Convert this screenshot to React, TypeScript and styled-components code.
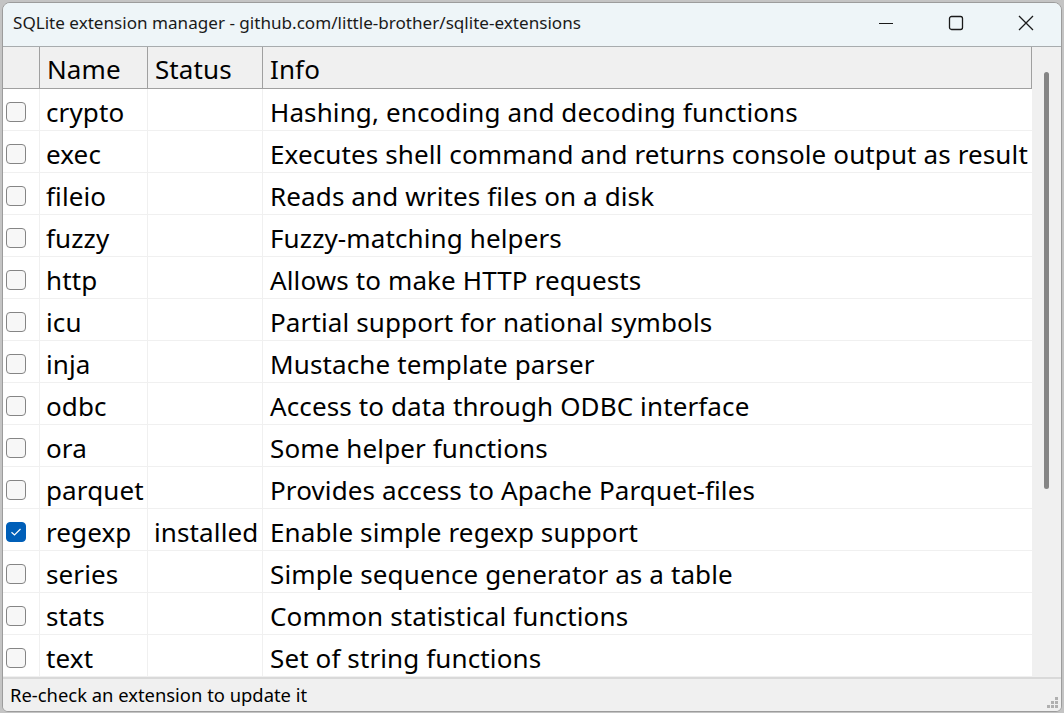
import React from "react";
import styled, { createGlobalStyle } from "styled-components";

const Global = createGlobalStyle`
  html, body { margin: 0; padding: 0; background: #c4c4c4; }
  body { font-family: "Noto Sans", "Open Sans", sans-serif; color: #000; }
  * { box-sizing: border-box; }
`;

const Window = styled.div`
  margin: 2px 2px 0 2px;
  width: 1060px;
  height: 710px;
  border: 1px solid #9c9c9c;
  border-radius: 8px 8px 6px 6px;
  background: #f0f0f0;
  overflow: hidden;
  display: flex;
  flex-direction: column;
`;

const TitleBar = styled.div`
  height: 44px;
  flex: none;
  background: #eef5f8;
  border-bottom: 1px solid #a8acae;
  display: flex;
  align-items: center;
  padding-left: 10px;
`;

const Title = styled.div`
  flex: 1;
  font-size: 17.1px;
  color: #1a1a1a;
  padding-bottom: 4px;
  white-space: nowrap;
`;

const CaptionButton = styled.div`
  width: 70px;
  height: 42px;
  display: flex;
  align-items: center;
  justify-content: center;
  padding-bottom: 4px;
`;

const Body = styled.div`
  flex: 1;
  display: flex;
  min-height: 0;
  background: #fff;
`;

const TableArea = styled.div`
  width: 1030px;
  display: flex;
  flex-direction: column;
  border-right: 1px solid #f0f0f0;
  overflow: hidden;
`;

const cols = "37px 108px 115px 769px";

const HeaderRow = styled.div`
  display: grid;
  flex: none;
  grid-template-columns: ${cols};
  height: 42px;
  background: #f0f0f0;
  border-bottom: 1px solid #a0a0a0;
  width: 1029px;
`;

const HeaderCell = styled.div`
  border-right: 1px solid #a0a0a0;
  font-size: 26px;
  padding-left: 7px;
  padding-top: 2px;
  display: flex;
  align-items: center;
  letter-spacing: 0.1px;
  white-space: nowrap;
  overflow: hidden;
`;

const Row = styled.div`
  display: grid;
  flex: none;
  grid-template-columns: ${cols};
  height: 42px;
  border-bottom: 1px solid #f0f0f0;
`;

const Cell = styled.div`
  border-right: 1px solid #f0f0f0;
  font-size: 26px;
  padding-left: 6px;
  display: flex;
  align-items: center;
  white-space: nowrap;
  overflow: hidden;
  letter-spacing: 0.12px;
  padding-top: 5px;
`;

const InfoCell = styled(Cell)`
  border-right: none;
  padding-left: 7px;
`;

const BoxCell = styled.div`
  border-right: 1px solid #f0f0f0;
  display: flex;
  align-items: center;
  padding-left: 3px;
  padding-top: 4px;
`;

const Check = styled.div<{ $on?: boolean }>`
  width: 20px;
  height: 20px;
  border-radius: 4px;
  border: 1px solid ${(p) => (p.$on ? "#005fb8" : "#858585")};
  background: ${(p) => (p.$on ? "#005fb8" : "#f7f7f7")};
  display: flex;
  align-items: center;
  justify-content: center;
`;

const ScrollTrack = styled.div`
  flex: 1;
  background: #f0f0f0;
  position: relative;
`;

const Thumb = styled.div`
  position: absolute;
  left: 11px;
  top: 25px;
  width: 5px;
  height: 417px;
  border-radius: 3px;
  background: #858585;
`;

const StatusBar = styled.div`
  height: 34px;
  flex: none;
  border-top: 2px solid #d9d9d9;
  background: #f0f0f0;
  display: flex;
  align-items: center;
  padding-left: 7px;
  font-size: 18.4px;
  position: relative;
  padding-bottom: 2px;
  white-space: nowrap;
`;

const Grip = styled.svg`
  position: absolute;
  right: 2px;
  bottom: 2px;
`;

const data: [string, string, string][] = [
  ["crypto", "", "Hashing, encoding and decoding functions"],
  ["exec", "", "Executes shell command and returns console output as result"],
  ["fileio", "", "Reads and writes files on a disk"],
  ["fuzzy", "", "Fuzzy-matching helpers"],
  ["http", "", "Allows to make HTTP requests"],
  ["icu", "", "Partial support for national symbols"],
  ["inja", "", "Mustache template parser"],
  ["odbc", "", "Access to data through ODBC interface"],
  ["ora", "", "Some helper functions"],
  ["parquet", "", "Provides access to Apache Parquet-files"],
  ["regexp", "installed", "Enable simple regexp support"],
  ["series", "", "Simple sequence generator as a table"],
  ["stats", "", "Common statistical functions"],
  ["text", "", "Set of string functions"],
];

export default function App() {
  return (
    <>
      <Global />
      <Window>
        <TitleBar>
          <Title>SQLite extension manager - github.com/little-brother/sqlite-extensions</Title>
          <CaptionButton>
            <svg width="16" height="16" viewBox="0 0 16 16">
              <line x1="1" y1="8.5" x2="15" y2="8.5" stroke="#1a1a1a" strokeWidth="1" />
            </svg>
          </CaptionButton>
          <CaptionButton>
            <svg width="16" height="16" viewBox="0 0 16 16">
              <rect x="1.5" y="1.5" width="13" height="13" rx="2" fill="none" stroke="#1a1a1a" strokeWidth="1.3" />
            </svg>
          </CaptionButton>
          <CaptionButton>
            <svg width="18" height="18" viewBox="0 0 18 18">
              <path d="M2 2 L16 16 M16 2 L2 16" stroke="#1a1a1a" strokeWidth="1.3" />
            </svg>
          </CaptionButton>
        </TitleBar>
        <Body>
          <TableArea>
            <HeaderRow>
              <HeaderCell />
              <HeaderCell>Name</HeaderCell>
              <HeaderCell>Status</HeaderCell>
              <HeaderCell>Info</HeaderCell>
            </HeaderRow>
            {data.map(([name, status, info]) => (
              <Row key={name}>
                <BoxCell>
                  <Check $on={status === "installed"}>
                    {status === "installed" && (
                      <svg width="12" height="10" viewBox="0 0 12 10">
                        <path d="M1.5 5.2 L4.5 8 L10.5 2" fill="none" stroke="#fff" strokeWidth="1.2" />
                      </svg>
                    )}
                  </Check>
                </BoxCell>
                <Cell>{name}</Cell>
                <Cell>{status}</Cell>
                <InfoCell>{info}</InfoCell>
              </Row>
            ))}
          </TableArea>
          <ScrollTrack>
            <Thumb />
          </ScrollTrack>
        </Body>
        <StatusBar>
          Re-check an extension to update it
          <Grip width="12" height="12" viewBox="0 0 12 12">
            <g fill="#b0b0b0">
              <rect x="8" y="0" width="3" height="3" />
              <rect x="4" y="4" width="3" height="3" />
              <rect x="8" y="4" width="3" height="3" />
              <rect x="0" y="8" width="3" height="3" />
              <rect x="4" y="8" width="3" height="3" />
              <rect x="8" y="8" width="3" height="3" />
            </g>
          </Grip>
        </StatusBar>
      </Window>
    </>
  );
}
